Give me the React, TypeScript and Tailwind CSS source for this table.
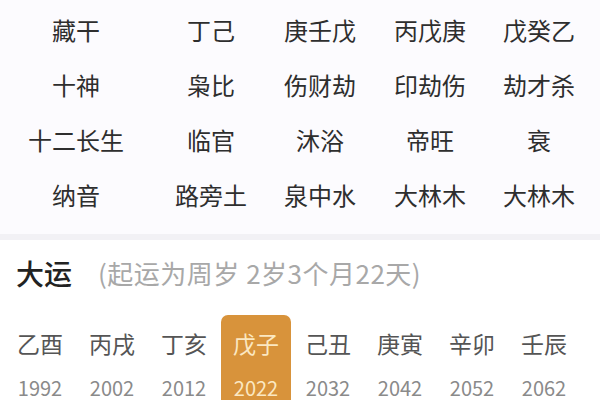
const TABLE: string[][] = [
  ['藏干', '丁己', '庚壬戊', '丙戊庚', '戊癸乙'],
  ['十神', '枭比', '伤财劫', '印劫伤', '劫才杀'],
  ['十二长生', '临官', '沐浴', '帝旺', '衰'],
  ['纳音', '路旁土', '泉中水', '大林木', '大林木'],
];

const DAYUN = [
  { gz: '乙酉', year: 1992 },
  { gz: '丙戌', year: 2002 },
  { gz: '丁亥', year: 2012 },
  { gz: '戊子', year: 2022, active: true },
  { gz: '己丑', year: 2032 },
  { gz: '庚寅', year: 2042 },
  { gz: '辛卯', year: 2052 },
  { gz: '壬辰', year: 2062 },
];

const font = { fontFamily: '"Noto Sans CJK SC", "Noto Sans", sans-serif' };

export default function App() {
  return (
    <div className="w-[600px] h-[400px] overflow-hidden bg-white" style={font}>
      {/* Pillar details table */}
      <div className="bg-[#fcfbfe] pt-[2px] h-[234px]">
        {TABLE.map((row, i) => (
          <div
            key={i}
            className="grid grid-cols-[152px_118px_100px_120px_98px] h-[55px] items-center text-[24px] text-[#2e2e2e]"
          >
            {row.map((cell, j) => (
              <div key={j} className="text-center leading-none">
                {cell}
              </div>
            ))}
          </div>
        ))}
      </div>
      <div className="h-[6px] bg-[#f2f1f5]" />

      {/* Da yun */}
      <div className="bg-white">
        <div className="flex items-center pl-[16px] pt-[16px] h-[50px]">
          <span className="text-[28px] text-[#222] font-medium leading-none">大运</span>
          <span className="ml-[26px] text-[26px] tracking-[0.5px] text-[#a8a8a8] leading-none">
            (起运为周岁 2岁3个月22天)
          </span>
        </div>
        <div className="flex pl-[4px] mt-[25px]">
          {DAYUN.map((d) => (
            <div
              key={d.year}
              className={
                d.active
                  ? 'w-[70px] mx-[1px] rounded-[7px] bg-[#d8933b] flex flex-col items-center pt-[14px] h-[100px]'
                  : 'w-[72px] flex flex-col items-center pt-[14px] h-[100px]'
              }
            >
              <span
                className={
                  d.active
                    ? 'text-[23px] leading-[28px] text-[#fbe8c2]'
                    : 'text-[23px] leading-[28px] text-[#555]'
                }
              >
                {d.gz}
              </span>
              <span
                className={
                  d.active
                    ? 'mt-[19px] text-[20px] leading-[24px] text-[#fbe8c2]'
                    : 'mt-[19px] text-[20px] leading-[24px] text-[#8a8a8a]'
                }
              >
                {d.year}
              </span>
            </div>
          ))}
        </div>
      </div>
    </div>
  );
}
